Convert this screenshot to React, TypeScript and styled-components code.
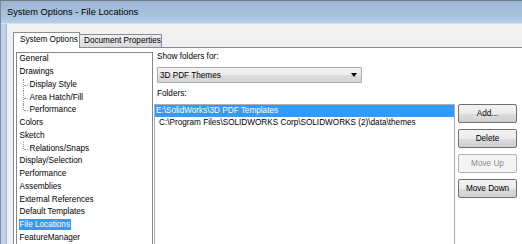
import React from 'react';
import styled, { createGlobalStyle, css } from 'styled-components';

const Global = createGlobalStyle`
  html, body { margin: 0; padding: 0; background: #fff; overflow: hidden; }
  body { font-family: "Liberation Sans", Arial, sans-serif; color: #000; }
  * { box-sizing: border-box; }
`;

const Window = styled.div`
  width: 522px;
  height: 244px;
  overflow: hidden;
  display: flex;
  flex-direction: column;
  background: #bcd2ea;
  border-top: 1px solid #6e7b89;
  border-left: 1px solid #7d8a99;
`;

const TitleBar = styled.div`
  height: 23px;
  flex: none;
  display: flex;
  align-items: center;
  padding-left: 6px;
  font-size: 9.3px;
  color: #000;
  background: linear-gradient(#9bb6d2, #a9c3df 70%, #b7cfe9);
  border-bottom: 1px solid #d4e3f3;
`;

const Frame = styled.div`
  flex: 1;
  display: flex;
  padding-left: 5px;
  min-height: 0;
`;

const Client = styled.div`
  flex: 1;
  display: flex;
  flex-direction: column;
  background: #f0f0f0;
  border-left: 1px solid #a7b8ca;
  padding: 8px 0 0 6px;
  min-width: 0;
`;

const TabRow = styled.div`
  display: flex;
  align-items: flex-end;
  height: 15px;
  flex: none;
  position: relative;
  z-index: 1;
`;

const Tab = styled.div<{ $active?: boolean }>`
  font-size: 8.2px;
  white-space: nowrap;
  border: 1px solid #898c95;
  border-bottom: none;
  ${p =>
    p.$active
      ? css`
          width: 67px;
          height: 16px;
          margin-bottom: -1px;
          padding: 2px 0 0 6px;
          background: #fff;
          position: relative;
          z-index: 2;
        `
      : css`
          width: 83px;
          height: 13px;
          margin-left: -1px;
          padding: 1px 0 0 4px;
          background: linear-gradient(#f0f0f0, #e3e3e3 50%, #d9d9d9);
        `}
`;

const Panel = styled.div`
  flex: 1;
  display: flex;
  background: #fff;
  border-top: 1px solid #898c95;
  border-left: 1px solid #898c95;
  min-height: 0;
`;

const TreeBox = styled.div`
  margin: 4px 0 0 2px;
  width: 137px;
  height: 220px;
  flex: none;
  border: 1px solid #828790;
  background: #fff;
  overflow: hidden;
  font-size: 8.2px;
`;

const TreeRow = styled.div<{ $child?: boolean; $last?: boolean }>`
  position: relative;
  height: 12.75px;
  line-height: 12.75px;
  padding-left: ${p => (p.$child ? 12.5 : 2.5)}px;
  white-space: nowrap;
  ${p =>
    p.$child &&
    css`
      &::before {
        content: '';
        position: absolute;
        left: 6px;
        top: 0;
        height: ${p.$last ? '50%' : '100%'};
        border-left: 1px dotted #9a9a9a;
      }
      &::after {
        content: '';
        position: absolute;
        left: 7px;
        top: 50%;
        width: 4px;
        border-top: 1px dotted #9a9a9a;
      }
    `}
`;

const TreeLabel = styled.span<{ $selected?: boolean }>`
  display: inline-block;
  height: 11px;
  line-height: 11px;
  vertical-align: middle;
  padding: 0 1px;
  margin-left: -1px;
  ${p =>
    p.$selected &&
    css`
      background: #3399ff;
      color: #fff;
    `}
`;

const RightPane = styled.div`
  flex: 1;
  display: flex;
  flex-direction: column;
  margin-left: 1px;
  font-size: 8.2px;
  min-width: 0;
`;

const FieldLabel = styled.div<{ $top: number }>`
  margin-top: ${p => p.$top}px;
  padding-left: 3px;
  height: 12px;
  line-height: 12px;
  white-space: nowrap;
`;

const Select = styled.div`
  margin: 4px 0 0 3px;
  width: 205px;
  height: 16px;
  border: 1px solid #acacac;
  border-radius: 1px;
  background: linear-gradient(#f2f2f2, #ebebeb 50%, #dddddd 51%, #d5d5d5);
  display: flex;
  align-items: center;
  justify-content: space-between;
  padding: 0 4px 0 2px;
`;

const Arrow = styled.span`
  width: 0;
  height: 0;
  border-left: 3.5px solid transparent;
  border-right: 3.5px solid transparent;
  border-top: 4px solid #000;
`;

const FolderRow = styled.div`
  display: flex;
  margin-top: 4px;
  flex: 1;
  min-height: 0;
`;

const ListBox = styled.div`
  width: 301px;
  flex: none;
  border: 1px solid #abadb3;
  border-bottom: none;
  background: #fff;
`;

const ListItem = styled.div<{ $selected?: boolean; $indent: number }>`
  height: 12px;
  line-height: 12px;
  white-space: nowrap;
  overflow: hidden;
  padding-left: ${p => p.$indent}px;
  ${p =>
    p.$selected &&
    css`
      background: #3399ff;
      color: #fff;
    `}
`;

const ButtonColumn = styled.div`
  display: flex;
  flex-direction: column;
  gap: 6px;
  margin-left: 3px;
`;

const Button = styled.button<{ $disabled?: boolean }>`
  width: 59px;
  height: 19px;
  padding: 0;
  font-family: inherit;
  font-size: 8.2px;
  border-radius: 2px;
  ${p =>
    p.$disabled
      ? css`
          border: 1px solid #adb2b5;
          background: #f4f4f4;
          color: #8b8b8b;
        `
      : css`
          border: 1px solid #707070;
          background: linear-gradient(#f2f2f2, #ebebeb 50%, #dddddd 51%, #cfcfcf);
          color: #000;
        `}
`;

const tree: { label: string; child?: boolean; last?: boolean; selected?: boolean }[] = [
  { label: 'General' },
  { label: 'Drawings' },
  { label: 'Display Style', child: true },
  { label: 'Area Hatch/Fill', child: true },
  { label: 'Performance', child: true, last: true },
  { label: 'Colors' },
  { label: 'Sketch' },
  { label: 'Relations/Snaps', child: true, last: true },
  { label: 'Display/Selection' },
  { label: 'Performance' },
  { label: 'Assemblies' },
  { label: 'External References' },
  { label: 'Default Templates' },
  { label: 'File Locations', selected: true },
  { label: 'FeatureManager' },
];

export default function App() {
  return (
    <>
      <Global />
      <Window>
        <TitleBar>System Options - File Locations</TitleBar>
        <Frame>
          <Client>
            <TabRow>
              <Tab $active>System Options</Tab>
              <Tab>Document Properties</Tab>
            </TabRow>
            <Panel>
              <TreeBox>
                {tree.map((t, i) => (
                  <TreeRow key={i} $child={t.child} $last={t.last}>
                    <TreeLabel $selected={t.selected}>{t.label}</TreeLabel>
                  </TreeRow>
                ))}
              </TreeBox>
              <RightPane>
                <FieldLabel $top={3}>Show folders for:</FieldLabel>
                <Select>
                  <span>3D PDF Themes</span>
                  <Arrow />
                </Select>
                <FieldLabel $top={5}>Folders:</FieldLabel>
                <FolderRow>
                  <ListBox>
                    <ListItem $selected $indent={1}>E:\SolidWorks\3D PDF Templates</ListItem>
                    <ListItem $indent={4}>C:\Program Files\SOLIDWORKS Corp\SOLIDWORKS (2)\data\themes</ListItem>
                  </ListBox>
                  <ButtonColumn>
                    <Button>Add...</Button>
                    <Button>Delete</Button>
                    <Button $disabled>Move Up</Button>
                    <Button>Move Down</Button>
                  </ButtonColumn>
                </FolderRow>
              </RightPane>
            </Panel>
          </Client>
        </Frame>
      </Window>
    </>
  );
}
